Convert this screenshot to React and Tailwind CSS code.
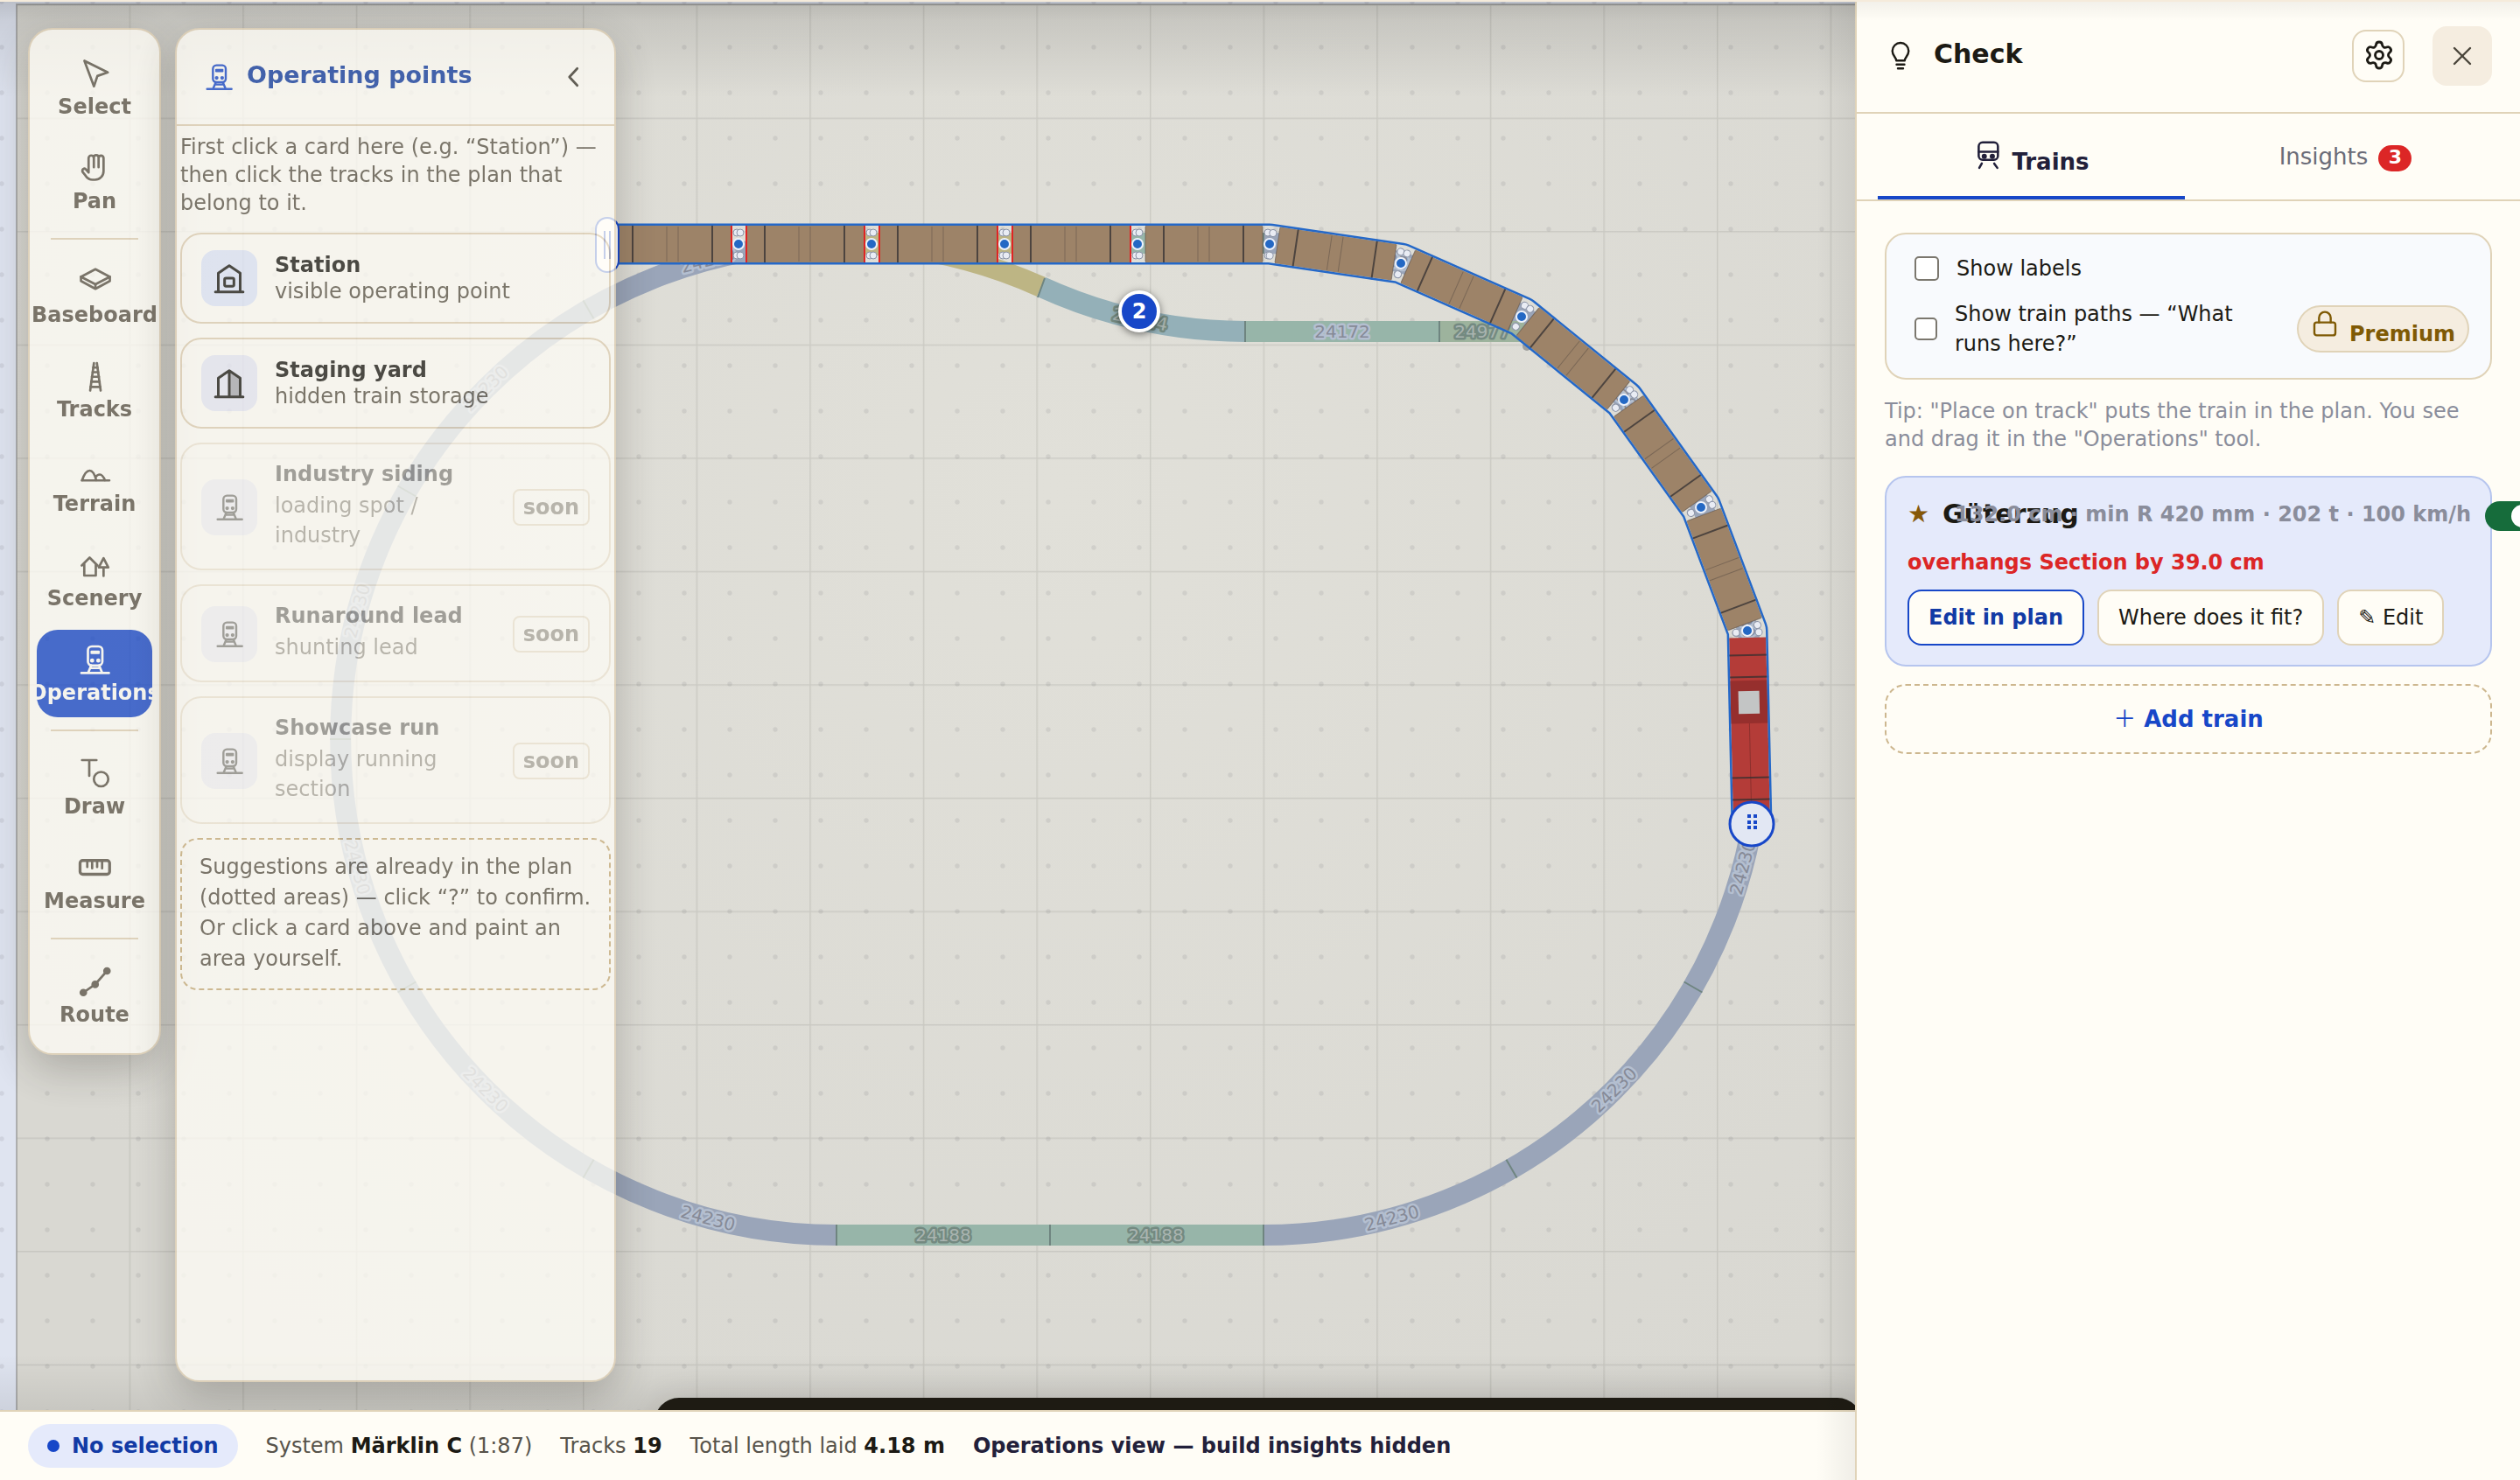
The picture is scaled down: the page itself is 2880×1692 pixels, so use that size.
import React from "react";
import { Settings, X, Lock } from "lucide-react";

/* ---------- icons ---------- */

const Icon = ({ children, className = "size-9", sw = 1.8 }) => (
  <svg
    viewBox="0 0 24 24"
    className={`overflow-visible ${className}`}
    fill="none"
    stroke="currentColor"
    strokeWidth={sw}
    strokeLinecap="round"
    strokeLinejoin="round"
    aria-hidden="true"
  >
    {children}
  </svg>
);

const TrainShape = () => (
  <>
    <rect x="7" y="2" width="11" height="14.5" rx="3" />
    <path d="M9.8 6h5.4M9.8 7h5.4M9.5 16.5 7.2 22M15.5 16.5l2.3 5.5M2 22.3h21M9.5 18.5h6" />
    <circle cx="10.2" cy="12.8" r=".7" fill="currentColor" />
    <circle cx="14.9" cy="12.8" r=".7" fill="currentColor" />
  </>
);

const shapes = {
  select: <path d="M4.3 2.3 22.100 11.200 14.200 13.900 11.600 21.800z" />,
  pan: (
    <path d="M7.500 15.500V4.500a2 2 0 0 1 4 0V11.500M11.500 11.500V4a1.800 1.800 0 0 1 3.600 0V11.500M15.100 11.500V4.500a1.900 1.900 0 0 1 3.800 0V14.500a6.500 6.500 0 0 1-6.500 6.500h-1.900c-2.500 0-4.200-1.400-5.500-3.400L3.100 15.200a1.600 1.600 0 0 1 2.500-2l1.900 2.300" />
  ),
  baseboard: (
    <>
      <path d="M12.700 2.500 23.700 8.300 12.700 14 1.700 8.300z" />
      <path d="M1.700 8.300v3.200l11 6 11-6V8.300M12.700 14v3.500" />
    </>
  ),
  tracks: (
    <>
      <path d="M11.600 2 8.700 23M13.800 2l2.900 21" />
      <path d="M11 5.500h3.400M10.600 9h4.200M10 12.500h5.400M9.500 16.300h6.400M9 20.200h7.400" />
    </>
  ),
  terrain: (
    <path d="M2.300 19.500H23.300M2.500 19.500c1.500-4.500 3.500-7.500 5.900-7.500s3.800 3 5 7.500M12.800 17c.8-1.200 2-2 3.200-2 1.900 0 3 2 4 4.500" />
  ),
  scenery: (
    <>
      <path d="M2.300 12.300 8.300 6.300l6 6M4.200 11v9h8.800v-9" />
      <path d="M18.900 6.800l-3.600 7h7.200zM18.900 14v6.300" />
    </>
  ),
  operations: <TrainShape />,
  draw: (
    <>
      <path d="M2.500 2h11M8 2v12" />
      <circle cx="17" cy="16.500" r="5.500" />
    </>
  ),
  measure: (
    <>
      <rect x="1" y="6.500" width="22.500" height="10.500" rx="2" strokeWidth="2.200" />
      <path d="M6.500 7.500v4M10.200 7.500v5M14 7.500v4M17.800 7.500v5" />
    </>
  ),
  route: (
    <>
      <path d="M3.500 20.500l9-6.300L21.500 4" />
      <circle cx="3.500" cy="20.500" r="2" fill="currentColor" />
      <circle cx="12.500" cy="14.300" r="2" fill="currentColor" />
      <circle cx="21.500" cy="4" r="2" fill="currentColor" />
    </>
  ),
};

const StationIcon = () => (
  <Icon className="size-10" sw={1.8}>
    <path d="M4.500 21V8.500L12 3.500l7.500 5V21M2.500 21.500h19" />
    <rect x="8.800" y="12" width="6.400" height="5.500" rx="1" />
  </Icon>
);

const StagingIcon = () => (
  <Icon className="size-10" sw={1.8}>
    <path d="M12 3.500l7.500 5V21H12z" fill="currentColor" fillOpacity=".3" stroke="none" />
    <path d="M4.500 21V8.500L12 3.500l7.500 5V21M12 4v17M2.500 21.500h19" />
  </Icon>
);

/* ---------- track plan ---------- */

const R = 567;
const CY = 845;
const RX = 1444;
const LX = 956;
const rad = (d) => (d * Math.PI) / 180;

// point on an end curve; a is measured from straight down, side is 1 (right) or -1 (left)
const onArc = (side, a, r = R) => [
  (side > 0 ? RX : LX) + side * r * Math.sin(rad(a)),
  CY + r * Math.cos(rad(a)),
];

const joints = [
  [693, 279],
  [844, 279],
  [996, 279],
  [1148, 279],
  [1300, 279],
  [1451, 279],
  [1601, 301],
  [1739, 362],
  [1856, 457],
  [1944, 580],
  [1997, 721],
  [2002, 942],
];
const spine = joints.map((p) => p.join(",")).join(" ");

const TrackLabel = ({ x, y, rot = 0, dark, children }) => (
  <text
    x={x}
    y={y}
    dy="7"
    textAnchor="middle"
    transform={`rotate(${rot} ${x} ${y})`}
    fontSize="20"
    paintOrder="stroke"
    strokeWidth="5"
    strokeLinejoin="round"
    stroke={dark ? "#748a81" : "#b4bfd0"}
    fill={dark ? "#a9b4b0" : "#868a97"}
  >
    {children}
  </text>
);

const Car = ({ from, to, loco, flagged }) => {
  const dx = to[0] - from[0];
  const dy = to[1] - from[1];
  const len = Math.hypot(dx, dy);
  const ang = (Math.atan2(dy, dx) * 180) / Math.PI;
  const end = len - 8;
  return (
    <g transform={`translate(${from[0]} ${from[1]}) rotate(${ang})`}>
      {loco ? (
        <>
          <rect x="8" y="-21" width={len - 8} height="42" fill="#b43c38" />
          <rect x="57" y="-21" width="49" height="42" fill="#962f2d" />
          <rect x="69" y="-12" width="26" height="24" fill="#c3c5c5" />
          <path d={`M106 0H${len}`} stroke="#8c302d" />
          <path d="M28-23V23M53-23V23M168-23V23M193-23V23" stroke="#3b3030" strokeOpacity=".8" strokeWidth="2" />
        </>
      ) : (
        <>
          <rect x="9" y="-21" width={len - 17} height="42" fill="#9d8368" />
          <path d="M30-23V23M121-23V23" stroke="#3a3534" strokeOpacity=".8" strokeWidth="2" />
          <path d="M69-20V20M82-20V20" stroke="#3a3534" strokeOpacity=".35" />
          <path d={`M9-20V20M${end}-20V20`} stroke="#5b5049" strokeOpacity=".6" />
        </>
      )}
      {flagged?.[0] && <path d="M9-21V21" stroke="#e02424" strokeWidth="2" />}
      {flagged?.[1] && <path d={`M${end}-21V21`} stroke="#e02424" strokeWidth="2" />}
      <g fill="#e9ecf4" stroke="#8b93a6">
        <circle cx="2" cy="-13" r="4" />
        <circle cx="2" cy="13" r="4" />
        {!loco && (
          <>
            <circle cx={len - 2} cy="-13" r="4" />
            <circle cx={len - 2} cy="13" r="4" />
          </>
        )}
      </g>
    </g>
  );
};

const Plan = () => {
  const dividers = [];
  const labels = [];
  for (const side of [1, -1]) {
    for (let a = 0; a <= 180; a += 30) dividers.push([onArc(side, a, R - 12), onArc(side, a, R + 12)]);
    for (let a = 15; a < 180; a += 30) {
      let rot = -side * a;
      if (a > 90) rot = side * (180 - a);
      labels.push([...onArc(side, a), rot]);
    }
  }
  return (
    <svg className="absolute inset-0 size-full" fontFamily="DejaVu Sans, sans-serif">
      <defs>
        <pattern id="dots" width="52" height="52" patternUnits="userSpaceOnUse" x="-24" y="-24">
          <circle cx="26" cy="26" r="2.700" fill="#5c5f68" fillOpacity=".12" />
        </pattern>
        <pattern id="grid" width="129.600" height="129.550" patternUnits="userSpaceOnUse" x="18" y="5">
          <path d="M.5 0V130M0 .5H130" stroke="#5a5a58" strokeOpacity=".15" strokeWidth="2" />
        </pattern>
        <radialGradient id="light" gradientUnits="userSpaceOnUse" cx="1200" cy="560" r="1300">
          <stop offset="0" stopColor="#e1e0d9" />
          <stop offset="1" stopColor="#d9d8d2" />
        </radialGradient>
        <mask id="rim" maskUnits="userSpaceOnUse" x="0" y="0" width="2200" height="1400">
          <polyline points={spine} fill="none" stroke="#fff" strokeWidth="47" strokeLinejoin="round" />
          <polyline points={spine} fill="none" stroke="#000" strokeWidth="42" strokeLinejoin="round" />
        </mask>
      </defs>

      <rect width="100%" height="100%" fill="#dfe4f0" />
      <rect x="19" y="5" width="100%" height="100%" fill="url(#light)" />
      <rect x="19" y="5" width="100%" height="100%" fill="url(#grid)" />
      <path d="M19 2000V5H4000" fill="none" stroke="#8f908e" strokeOpacity=".6" strokeWidth="2" />
      <rect width="100%" height="100%" fill="url(#dots)" />

      <g fill="none" strokeWidth="24">
        <path d={`M${RX} ${CY + R}A${R} ${R} 0 0 0 ${RX} ${CY - R}`} stroke="#9aa5b9" />
        <path d={`M${LX} ${CY + R}A${R} ${R} 0 0 1 ${LX} ${CY - R}`} stroke="#9aa5b9" />
        <path d={`M${LX} ${CY + R}H${RX}`} stroke="#97b5a9" />
        <path d={`M1200 ${CY - R}H${RX}`} stroke="#97b5a9" />
        <path d={`M${LX} ${CY - R}H1200`} stroke="#bdb584" />
        <path d={`M${LX} ${CY - R}A${R} ${R} 0 0 1 1190 328`} stroke="#bdb584" />
        <path d={`M1190 328A${R} ${R} 0 0 0 1423 379`} stroke="#94b0b8" />
        <path d="M1423 379H1645" stroke="#97b5a9" />
        <path d="M1645 379H1742" stroke="#9db39d" />
      </g>
      <circle cx="1745" cy="396" r="5" fill="#8f908e" fillOpacity=".8" />
      <g stroke="#6f8580" strokeWidth="2">
        {dividers.map(([a, b], i) => (
          <line key={i} x1={a[0]} y1={a[1]} x2={b[0]} y2={b[1]} />
        ))}
        <path d="M1200 1400v24M1423 367v24M1645 367v24M1194 318l-8 22" fill="none" />
      </g>
      {labels.map(([x, y, rot], i) => (
        <TrackLabel key={i} x={x} y={y} rot={rot}>
          24230
        </TrackLabel>
      ))}
      <TrackLabel x={1078} y={1412} dark>24188</TrackLabel>
      <TrackLabel x={1321} y={1412} dark>24188</TrackLabel>
      <TrackLabel x={1534} y={379}>24172</TrackLabel>
      <TrackLabel x={1694} y={379} dark>24977</TrackLabel>
      <TrackLabel x={1303} y={365} rot={12} dark>24224</TrackLabel>

      {joints.slice(0, -1).map((p, i) => (
        <Car
          key={i}
          from={p}
          to={joints[i + 1]}
          loco={i === joints.length - 2}
          flagged={[i >= 1 && i <= 3, i <= 3]}
        />
      ))}
      <rect x="650" y="200" width="1450" height="760" fill="#2468c8" mask="url(#rim)" />
      {joints.slice(1, -1).map(([x, y]) => (
        <circle key={x} cx={x} cy={y} r="6" fill="#2468c4" stroke="#eef2fb" strokeWidth="2" />
      ))}

      <g stroke="#1747c8">
        <rect x="681" y="249" width="26" height="62" rx="13" fill="#fff" strokeWidth="2" />
        <path d="M691 264v32M697 264v32" strokeWidth="2" />
        <circle cx="2002" cy="942" r="25" fill="#e2e7f3" strokeWidth="3" />
      </g>
      <g fill="#1747c8">
        {[931, 938, 944].map((y) => (
          <React.Fragment key={y}>
            <rect x="1997" y={y} width="4" height="4" />
            <rect x="2004" y={y} width="4" height="4" />
          </React.Fragment>
        ))}
      </g>
    </svg>
  );
};

/* ---------- tool rail ---------- */

const tools = [
  ["select", "Select"],
  ["pan", "Pan"],
  null,
  ["baseboard", "Baseboard"],
  ["tracks", "Tracks"],
  ["terrain", "Terrain"],
  ["scenery", "Scenery"],
  ["operations", "Operations"],
  null,
  ["draw", "Draw"],
  ["measure", "Measure"],
  null,
  ["route", "Route"],
];

const floating =
  "rounded-[28px] border-2 border-[#e0d0b4] bg-[#fffdf6] opacity-75 shadow-[0_16px_48px_rgba(28,26,20,0.32)]";

const ToolRail = () => (
  <nav
    aria-label="Tools"
    className={`${floating} flex w-[152px] shrink-0 flex-col items-center gap-2 self-start px-2 py-4`}
  >
    {tools.map((t, i) =>
      t ? (
        <button
          key={t[0]}
          type="button"
          className={`flex h-[100px] w-full flex-col items-center justify-center gap-1.5 rounded-3xl pt-0.5 font-bold ${
            t[0] === "operations" ? "bg-[#1747c8] text-[#fffdf6]" : "text-[#5a5346]"
          }`}
        >
          <Icon>{shapes[t[0]]}</Icon>
          <span className="leading-7 whitespace-nowrap">{t[1]}</span>
        </button>
      ) : (
        <hr key={i} className="my-1.5 w-[100px] border-t-2 border-[#e0d0b4]" />
      )
    )}
  </nav>
);

/* ---------- operating points ---------- */

const points = [
  ["Station", "visible operating point", <StationIcon key="a" />],
  ["Staging yard", "hidden train storage", <StagingIcon key="b" />],
  ["Industry siding", "loading spot / industry"],
  ["Runaround lead", "shunting lead"],
  ["Showcase run", "display running section"],
];

const PointCard = ({ title, sub, icon, active }) => (
  <button
    type="button"
    disabled={!icon}
    className={`flex w-full items-center gap-5 rounded-3xl border-2 border-[#e0d0b4] px-[22px] text-left ${
      icon ? "py-[18px]" : "pt-[19px] pb-[17px] opacity-50"
    }`}
  >
    <span
      className={`flex size-16 shrink-0 items-center justify-center rounded-2xl text-[#1c1a14] ${
        active ? "bg-[#dfe6f8]" : "bg-[#e8e9f5]"
      }`}
    >
      {icon || (
        <Icon className="size-8">
          <TrainShape />
        </Icon>
      )}
    </span>
    <span className="flex-1">
      <span className="block leading-[30px] font-bold text-[#1c1a14]">{title}</span>
      <span className={`block text-[#5a5346] ${icon ? "leading-[30px]" : "py-1 leading-[34px]"}`}>{sub}</span>
    </span>
    {!icon && (
      <span className="rounded-lg border-2 border-[#e0d0b4] px-2.5 leading-[38px] font-bold text-[#5a5346]">soon</span>
    )}
  </button>
);

const OperatingPoints = () => (
  <section className={`${floating} flex w-[504px] shrink-0 flex-col`}>
    <header className="flex h-[110px] items-center border-b-2 border-[#e0d0b4] pr-7 pl-8">
      <Icon className="size-8 text-[#1747c8]">
        <TrainShape />
      </Icon>
      <h2 className="ml-4 flex-1 pb-1 text-[27px] leading-8 font-bold text-[#123c9f]">Operating points</h2>
      <button type="button" aria-label="Collapse" className="text-[#3a362c]">
        <Icon>
          <path d="M14.500 5.500 8.500 12l6 6.500" />
        </Icon>
      </button>
    </header>
    <div className="flex flex-col gap-4 px-1 pt-2">
      <p className="mb-0.5 leading-8 text-[#5a5346]">
        First click a card here (e.g. “Station”) — then click the tracks in the plan that belong to it.
      </p>
      {points.map(([title, sub, icon], i) => (
        <PointCard key={title} title={title} sub={sub} icon={icon} active={i === 0} />
      ))}
      <p className="rounded-[20px] border-2 border-dashed border-[#c9ae7c] px-5 pt-[14px] pb-4 leading-[35px] text-[#5a5346]">
        Suggestions are already in the plan (dotted areas) — click “?” to confirm. Or click a card above and paint an area
        yourself.
      </p>
    </div>
  </section>
);

/* ---------- check sidebar ---------- */

const box = "shrink-0 appearance-none rounded-[5px] border-2 border-[#7b776e] bg-white";
const plainButton = "h-16 rounded-2xl border-2 bg-[#fffdf6] px-[22px] whitespace-nowrap";

const CheckSidebar = () => (
  <aside className="relative z-10 flex w-[760px] shrink-0 flex-col overflow-hidden border-l-2 border-[#e0d3b8] bg-[#fffdf6]">
    <header className="flex h-[130px] shrink-0 items-center border-b-2 border-[#e0d3b8] pr-8 pl-8">
      <Icon className="size-9" sw={1.6}>
        <path d="M8.800 15.500c0-2.400-3-3.600-3-7.300a6.200 6.200 0 0 1 12.400 0c0 3.700-3 4.900-3 7.300zM9 18.500h6M10 21.500h4" />
      </Icon>
      <h2 className="ml-5 flex-1 pb-1 text-[30px] leading-9 font-bold">Check</h2>
      <button
        type="button"
        aria-label="Settings"
        className="flex size-[60px] items-center justify-center rounded-2xl border-2 border-[#e0d3b8] pb-0.5 pl-0.5"
      >
        <Settings className="size-9 shrink-0" strokeWidth={1.9} />
      </button>
      <button
        type="button"
        aria-label="Close"
        className="ml-8 flex size-[68px] items-center justify-center rounded-2xl bg-[#f5ede0] text-[#4a453b]"
      >
        <X className="size-9" strokeWidth={1.6} />
      </button>
    </header>

    <div role="tablist" className="grid h-[100px] shrink-0 grid-cols-2 gap-2 border-b-2 border-[#e0d3b8] px-6 text-[26px]">
      <button
        type="button"
        role="tab"
        aria-selected="true"
        className="flex items-center justify-center gap-2.5 border-b-4 border-[#1747c8] font-bold text-[#22203a]"
      >
        <Icon className="mt-[30px] size-[34px] self-start">
          <rect x="4.500" y="2" width="15.500" height="14" rx="3.200" />
          <path d="M4.500 9.500H20M7 19l-2 3.500M17 19l2.500 3.500" />
          <circle cx="9" cy="13.200" r="1.200" fill="currentColor" />
          <circle cx="15.500" cy="13.200" r="1.200" fill="currentColor" />
        </Icon>
        <span className="pt-4">Trains</span>
      </button>
      <button
        type="button"
        role="tab"
        aria-selected="false"
        className="flex items-center justify-center gap-3 text-[#6b6c78]"
      >
        Insights
        <span className="mt-1 flex h-[30px] w-[38px] items-center justify-center rounded-full bg-[#dc2626] pb-0.5 text-[22px] leading-none font-bold text-white">
          3
        </span>
      </button>
    </div>

    <div className="px-8 pt-9">
      <div className="flex flex-col gap-[18px] rounded-3xl border-2 border-[#e0d3b8] bg-[#f8fafd] py-[22px] pr-6 pl-8">
        <label className="flex items-center gap-5 leading-[34px]">
          <input type="checkbox" className={`${box} size-7`} />
          Show labels
        </label>
        <div className="flex items-center gap-5">
          <label className="flex flex-1 items-center gap-5 leading-[34px]">
            <input type="checkbox" className={`${box} size-[26px]`} />
            Show train paths — “What runs here?”
          </label>
          <span className="flex h-[54px] items-center gap-3 rounded-full border-2 border-[#e0d3b8] bg-[#f5ede0] px-[14px] font-bold text-[#7f5a05]">
            <Lock className="mb-3 size-8" strokeWidth={1.8} />
            <span className="pt-3 leading-8">Premium</span>
          </span>
        </div>
      </div>

      <p className="mt-5 leading-8 text-[#8a8d9b]">
        Tip: "Place on track" puts the train in the plan. You see and drag it in the "Operations" tool.
      </p>

      <article className="mt-[26px] rounded-3xl border-2 border-[#b6c5ee] bg-[#e5eafb] px-6 py-[22px]">
        <div className="flex h-[38px] items-center gap-4 pt-0.5">
          <button type="button" aria-label="Favourite" className="w-6 shrink-0 text-[28px] leading-none text-[#855808]">
            ★
          </button>
          <h3 className="min-w-0 flex-1 text-[30px] leading-9 font-bold whitespace-nowrap">Güterzug</h3>
          <span className="-ml-0.5 shrink-0 font-bold whitespace-nowrap text-[#8a8d9b]">
            132.0 cm · min R 420 mm · 202 t · 100 km/h
          </span>
          <input
            type="checkbox"
            role="switch"
            aria-label="Show Güterzug on the plan"
            defaultChecked
            className="relative mt-1 h-[34px] w-[60px] shrink-0 appearance-none rounded-full bg-[#166c3b] before:absolute before:top-1 before:right-1 before:size-[26px] before:rounded-full before:bg-white"
          />
        </div>
        <p className="mt-5 leading-[34px] font-bold text-[#dc2626]">overhangs Section by 39.0 cm</p>
        <div className="mt-[14px] flex gap-[15px]">
          <button type="button" className={`${plainButton} border-[#1747c8] font-bold text-[#123aa5]`}>
            Edit in plan
          </button>
          <button type="button" className={`${plainButton} border-[#e0d3b8]`}>
            Where does it fit?
          </button>
          <button type="button" className={`${plainButton} border-[#e0d3b8]`}>
            ✎ Edit
          </button>
        </div>
      </article>

      <button
        type="button"
        className="mt-5 h-20 w-full rounded-3xl border-2 border-dashed border-[#cdb78f] text-[26px] font-bold text-[#1747c8]"
      >
        <span className="font-normal">＋</span> Add train
      </button>
    </div>
  </aside>
);

/* ---------- status bar ---------- */

const StatusBar = () => (
  <footer className="relative flex h-20 shrink-0 items-center gap-8 border-t-2 border-[#e0d3b8] bg-[#fffdf6] px-8 whitespace-nowrap text-[#57534a]">
    <span className="flex h-[50px] items-center gap-[14px] rounded-full bg-[#e5eafb] px-[22px] font-bold text-[#123aa5]">
      <span className="size-3.5 rounded-full bg-[#1747c8]" />
      No selection
    </span>
    <span>
      System <b className="text-[#1c1a14]">Märklin C</b> (1:87)
    </span>
    <span>
      Tracks <b className="text-[#1c1a14]">19</b>
    </span>
    <span>
      Total length laid <b className="text-[#1c1a14]">4.18 m</b>
    </span>
    <b className="text-[#22203a]">Operations view — build insights hidden</b>
  </footer>
);

export default function App() {
  return (
    <div className="relative flex h-screen overflow-hidden bg-[#fffdf6] font-['DejaVu_Sans','Noto_Sans_CJK_SC',sans-serif] text-2xl text-[#1c1a14]">
      <div className="relative flex min-w-0 flex-1 flex-col">
        <main className="relative min-h-0 flex-1 overflow-hidden">
          <Plan />
          <div className="absolute inset-x-0 top-0 h-28 bg-linear-to-b from-black/12 to-transparent" />
          <div className="absolute inset-x-0 bottom-0 h-16 bg-linear-to-t from-black/8 to-transparent" />
          <div className="absolute -right-2 -bottom-20 left-[748px] h-[94px] rounded-[28px] bg-[#1e1b13] shadow-[0_8px_40px_rgba(28,26,20,0.2)]" />
          <button
            type="button"
            className="absolute top-[332px] left-[1278px] flex size-12 items-center justify-center rounded-full border-4 border-white bg-[#1747c8] font-bold text-white shadow-[0_2px_8px_rgba(0,0,0,0.5)]"
          >
            2
          </button>
          <div className="absolute inset-0 flex gap-4 p-8">
            <ToolRail />
            <OperatingPoints />
          </div>
        </main>
        <StatusBar />
        <div className="pointer-events-none absolute inset-y-0 right-0 w-11 bg-linear-to-l from-black/6 to-transparent" />
      </div>
      <CheckSidebar />
      <div className="pointer-events-none absolute inset-x-0 top-0 z-20 h-6 border-t-2 border-[#f5ebdb] bg-linear-to-b from-black/5 to-transparent" />
    </div>
  );
}
